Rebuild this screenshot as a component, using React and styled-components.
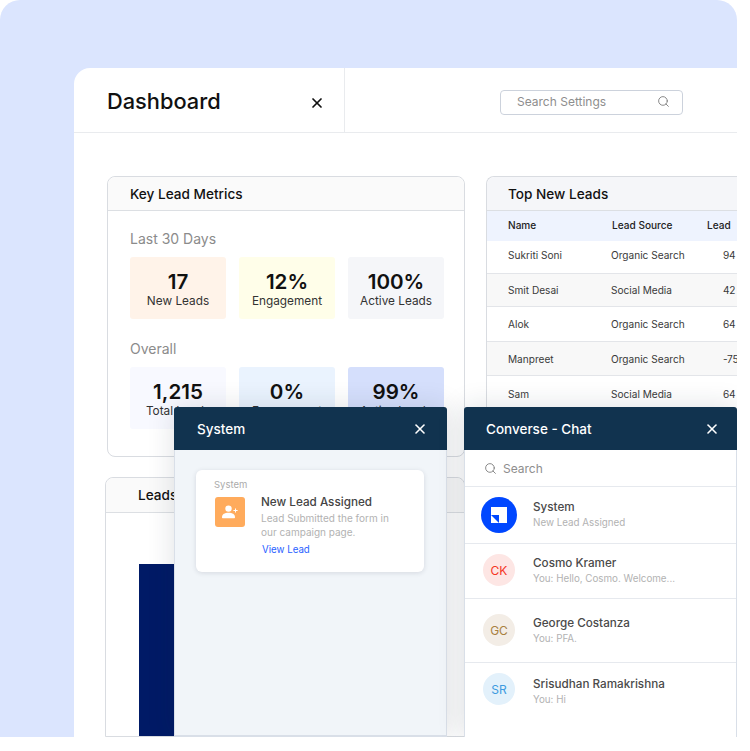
import React from "react";
import styled, { createGlobalStyle } from "styled-components";
import { Search, X } from "lucide-react";

const GlobalStyle = createGlobalStyle`
  body {
    margin: 0;
    background: #ffffff;
    font-family: Inter, "Noto Sans", sans-serif;
    color: #111111;
  }
`;

const Backdrop = styled.div`
  position: relative;
  width: 737px;
  height: 737px;
  box-sizing: border-box;
  padding: 68px 0 0 74px;
  background: #dbe5fe;
  border-radius: 20px 20px 0 0;
`;

const Window = styled.div`
  height: 669px;
  background: #ffffff;
  border-radius: 16px 0 0 0;
  overflow: hidden;
`;

const Header = styled.header`
  display: flex;
  height: 64px;
  border-bottom: 1px solid #e9ebee;
`;

const TitleBlock = styled.div`
  display: flex;
  align-items: center;
  justify-content: space-between;
  box-sizing: border-box;
  width: 271px;
  padding: 0 19px 0 33px;
  border-right: 1px solid #e9ebee;
`;

const Title = styled.h1`
  margin: 2px 0 0;
  font-size: 21.8px;
  font-weight: 500;
`;

const HeaderClose = styled(X)`
  margin-top: 5px;
`;

const SearchBox = styled.div`
  display: flex;
  align-items: center;
  justify-content: space-between;
  box-sizing: border-box;
  width: 183px;
  height: 25px;
  margin: 22px 0 0 155px;
  padding: 0 12px 2px 16px;
  border: 1px solid #ccd2dc;
  border-radius: 4px;
  font-size: 12px;
  color: #8e8e8e;
`;

const Content = styled.div`
  display: grid;
  grid-template-columns: 360px 1fr;
  column-gap: 21px;
  padding: 43px 0 0 31px;
`;

const LeftColumn = styled.div`
  display: flex;
  flex-direction: column;
  gap: 20px;
`;

const Card = styled.section`
  box-sizing: border-box;
  margin-left: ${(p) => p.$inset || 0}px;
  border: 1px solid #d9dce1;
  border-radius: 8px 8px 0 0;
  background: #ffffff;
`;

const MetricsCard = styled(Card)`
  height: 281px;
  width: 358px;
  border-radius: 8px;
`;

const CardHead = styled.div`
  height: ${(p) => p.$h || 33}px;
  display: flex;
  align-items: center;
  padding-left: ${(p) => p.$pad || 22}px;
  background: ${(p) => p.$bg || "#fafafa"};
  border-bottom: 1px solid #dcdfe3;
  border-radius: 8px 8px 0 0;
  font-size: 13.6px;
  font-weight: 500;
`;

const MetricsBody = styled.div`
  padding: 19px 20px 0 22px;
`;

const SectionLabel = styled.div`
  height: 27px;
  font-size: 14px;
  line-height: 17px;
  color: #8b8b8b;
`;

const TileRow = styled.div`
  display: grid;
  grid-template-columns: 96px 96px 96px;
  column-gap: 13px;
  margin-bottom: 21px;
`;

const Tile = styled.div`
  height: 62px;
  padding-top: 13px;
  box-sizing: border-box;
  text-align: center;
  border-radius: 3px;
  background: ${(p) => p.$bg};
`;

const TileValue = styled.div`
  font-size: 20.6px;
  line-height: 23px;
  font-weight: 600;
`;

const TileLabel = styled.div`
  margin-top: 1px;
  font-size: 11.8px;
  line-height: 15px;
  color: #333333;
`;

const LeadsCard = styled(Card)`
  width: 360px;
  height: 260px;
`;

const BarArea = styled.div`
  padding: 51px 0 0 33px;
`;

const Bar = styled.div`
  width: 60px;
  height: 172px;
  background: #001a66;
`;

const TableCard = styled(Card)`
  width: 300px;
  height: 260px;
  border-right: 0;
  border-radius: 8px 0 0 0;
`;

const TableRow = styled.div`
  display: grid;
  grid-template-columns: 103px 112px 1fr;
  align-items: center;
  padding: 0 0 ${(p) => p.$lift || 0}px 21px;
  box-sizing: border-box;
  height: ${(p) => p.$h}px;
  font-size: 10.1px;
  color: #3a3a3a;
  background: ${(p) => (p.$alt ? "#f8f8f8" : "#ffffff")};
  border-bottom: 1px solid #e3e5e9;
`;

const TableHead = styled(TableRow)`
  grid-template-columns: 104px 95px 1fr;
  background: #eef3fe;
  border-bottom: 0;
  font-weight: 500;
  color: #222222;
`;

const Score = styled.span`
  letter-spacing: -0.3px;
`;

const Popup = styled.aside`
  position: absolute;
  top: 407px;
  left: ${(p) => p.$left}px;
  width: 273px;
  height: 330px;
  display: flex;
  flex-direction: column;
  box-shadow: 0 0 26px rgba(30, 40, 60, 0.14);
  clip-path: inset(-40px ${(p) => (p.$clipRight ? 0 : "-40px")} -40px -40px);
`;

const PopupBar = styled.div`
  display: flex;
  align-items: center;
  justify-content: space-between;
  height: 43px;
  flex-shrink: 0;
  padding: 0 ${(p) => p.$right}px 0 ${(p) => p.$leftPad}px;
  background: #11334f;
  border-radius: 3px 3px 0 0;
  color: #ffffff;
  font-size: 13.5px;
  font-weight: 500;
`;

const PopupBody = styled.div`
  flex: 1;
  border: 1px solid #d9dfe8;
  border-top: 0;
  border-bottom-width: 2px;
  background: ${(p) => p.$bg};
`;

const Notice = styled.div`
  box-sizing: border-box;
  width: 228px;
  height: 102px;
  margin: 20px 0 0 21px;
  padding: 9px 0 0 18px;
  background: #ffffff;
  border-radius: 6px;
  box-shadow: 0 1px 5px rgba(40, 50, 70, 0.14);
`;

const NoticeFrom = styled.div`
  font-size: 9.5px;
  line-height: 12px;
  color: #ababab;
`;

const NoticeMain = styled.div`
  display: flex;
  gap: 16px;
  margin-top: 6px;
  padding-left: 1px;
`;

const NoticeIcon = styled.div`
  display: flex;
  align-items: center;
  justify-content: center;
  flex-shrink: 0;
  width: 30px;
  height: 30px;
  border-radius: 3px;
  background: #ffab5c;
`;

const NoticeCopy = styled.div`
  margin-top: -2px;
`;

const NoticeTitle = styled.div`
  font-size: 11.7px;
  line-height: 14px;
  font-weight: 500;
  color: #444444;
`;

const NoticeText = styled.div`
  width: 145px;
  margin-top: 3px;
  font-size: 10px;
  line-height: 13.5px;
  color: #b2b2b2;
`;

const NoticeLink = styled.a`
  display: block;
  margin-top: 4px;
  padding-left: 1px;
  font-size: 9.7px;
  line-height: 13px;
  color: #2962ff;
`;

const ChatSearch = styled.div`
  display: flex;
  align-items: center;
  gap: 6px;
  height: 36px;
  padding-left: 19px;
  border-bottom: 1px solid #e6e9ee;
  font-size: 12px;
  color: #8e8e8e;
`;

const ChatRow = styled.div`
  display: flex;
  align-items: flex-start;
  gap: 18px;
  box-sizing: border-box;
  height: ${(p) => p.$h}px;
  padding: ${(p) => p.$top}px 0 0 18px;
  border-bottom: ${(p) => (p.$last ? "0" : "1px solid #e6e9ee")};
`;

const Avatar = styled.div`
  display: flex;
  align-items: center;
  justify-content: center;
  flex-shrink: 0;
  width: 32px;
  height: 32px;
  border-radius: 50%;
  font-size: 12px;
  color: ${(p) => p.$fg};
  background: ${(p) => p.$bg};
`;

const LogoAvatar = styled.div`
  flex-shrink: 0;
  width: 36px;
  height: 36px;
  margin: 0 -2px;
  border-radius: 50%;
  background: #0047ff;
`;

const ChatCopy = styled.div`
  padding-top: ${(p) => p.$drop}px;
`;

const ChatName = styled.div`
  font-size: 11.7px;
  line-height: 14px;
  font-weight: 500;
  color: #4a4a4a;
`;

const ChatLine = styled.div`
  margin-top: 3px;
  font-size: 9.8px;
  line-height: 12px;
  color: #b2b2b2;
`;

const leads = [
  { name: "Sukriti Soni", source: "Organic Search", score: "94", h: 33, lift: 4 },
  { name: "Smit Desai", source: "Social Media", score: "42", h: 33, alt: true },
  { name: "Alok", source: "Organic Search", score: "64", h: 35 },
  { name: "Manpreet", source: "Organic Search", score: "-75", h: 34, alt: true },
  { name: "Sam", source: "Social Media", score: "64", h: 36 },
];

const recent = [
  { label: "New Leads", value: "17", bg: "#fff3e9" },
  { label: "Engagement", value: "12%", bg: "#fffee9" },
  { label: "Active Leads", value: "100%", bg: "#f5f6f9" },
];

const overall = [
  { label: "Total Leads", value: "1,215", bg: "#f8f9ff" },
  { label: "Engagement", value: "0%", bg: "#eaf3fe" },
  { label: "Active Leads", value: "99%", bg: "#d5dffc" },
];

const chats = [
  { name: "Cosmo Kramer", line: "You: Hello, Cosmo. Welcome...", initials: "CK", fg: "#f5351f", bg: "#fde6e4", h: 55, top: 10, drop: 2 },
  { name: "George Costanza", line: "You: PFA.", initials: "GC", fg: "#a8803f", bg: "#f3ede6", h: 64, top: 15, drop: 2 },
  { name: "Srisudhan Ramakrishna", line: "You: Hi", initials: "SR", fg: "#3d9be0", bg: "#e3f1fb", h: 74, top: 10, drop: 4, last: true },
];

const Tiles = ({ items }) => (
  <TileRow>
    {items.map((item) => (
      <Tile key={item.label} $bg={item.bg}>
        <TileValue>{item.value}</TileValue>
        <TileLabel>{item.label}</TileLabel>
      </Tile>
    ))}
  </TileRow>
);

const App = () => {
  return (
    <>
      <GlobalStyle />
      <Backdrop>
        <Window>
          <Header>
            <TitleBlock>
              <Title>Dashboard</Title>
              <HeaderClose size={16} strokeWidth={2.6} color="#111" />
            </TitleBlock>
            <SearchBox>
              Search Settings
              <Search size={13} strokeWidth={1.6} color="#777" />
            </SearchBox>
          </Header>
          <Content>
            <LeftColumn>
              <MetricsCard $inset={2}>
                <CardHead>Key Lead Metrics</CardHead>
                <MetricsBody>
                  <SectionLabel>Last 30 Days</SectionLabel>
                  <Tiles items={recent} />
                  <SectionLabel>Overall</SectionLabel>
                  <Tiles items={overall} />
                </MetricsBody>
              </MetricsCard>
              <LeadsCard>
                <CardHead $h={34} $pad={32}>Leads</CardHead>
                <BarArea>
                  <Bar />
                </BarArea>
              </LeadsCard>
            </LeftColumn>
            <TableCard>
              <CardHead $bg="#f5f6f9" $pad={21}>Top New Leads</CardHead>
              <TableHead $h={30} $lift={2}>
                <span>Name</span>
                <span>Lead Source</span>
                <span>Lead</span>
              </TableHead>
              {leads.map((lead) => (
                <TableRow key={lead.name} $h={lead.h} $alt={lead.alt} $lift={lead.lift}>
                  <span>{lead.name}</span>
                  <span>{lead.source}</span>
                  <Score>{lead.score}</Score>
                </TableRow>
              ))}
            </TableCard>
          </Content>
        </Window>

        <Popup $left={174}>
          <PopupBar $leftPad={23} $right={19}>
            System
            <X size={16} strokeWidth={2.4} />
          </PopupBar>
          <PopupBody $bg="#f1f5f9">
            <Notice>
              <NoticeFrom>System</NoticeFrom>
              <NoticeMain>
                <NoticeIcon>
                  <svg width="16" height="14" viewBox="0 0 16 14" fill="#fff">
                    <circle cx="6.5" cy="3.6" r="3.2" />
                    <path d="M0 12.200c0-2.900 2.600-4.400 6.500-4.400s6.500 1.500 6.500 4.400c0 .6-.4 1-1 1H1c-.6 0-1-.4-1-1z" />
                    <path d="M13 3.400h1v1.600h1.600v1H14v1.600h-1V6h-1.600V5H13z" />
                  </svg>
                </NoticeIcon>
                <NoticeCopy>
                  <NoticeTitle>New Lead Assigned</NoticeTitle>
                  <NoticeText>Lead Submitted the form in our campaign page.</NoticeText>
                  <NoticeLink>View Lead</NoticeLink>
                </NoticeCopy>
              </NoticeMain>
            </Notice>
          </PopupBody>
        </Popup>

        <Popup $left={464} $clipRight>
          <PopupBar $leftPad={22} $right={17}>
            Converse - Chat
            <X size={16} strokeWidth={2.4} />
          </PopupBar>
          <PopupBody $bg="#ffffff">
            <ChatSearch>
              <Search size={13} strokeWidth={1.6} color="#777" />
              Search
            </ChatSearch>
            <ChatRow $h={57} $top={10}>
              <LogoAvatar>
                <svg width="36" height="36" viewBox="0 0 36 36">
                  <rect x="10" y="10" width="16" height="16" fill="#fff" />
                  <path d="M10 18h8v8z" fill="#0047ff" />
                </svg>
              </LogoAvatar>
              <ChatCopy $drop={3}>
                <ChatName>System</ChatName>
                <ChatLine>New Lead Assigned</ChatLine>
              </ChatCopy>
            </ChatRow>
            {chats.map((chat) => (
              <ChatRow key={chat.name} $h={chat.h} $top={chat.top} $last={chat.last}>
                <Avatar $fg={chat.fg} $bg={chat.bg}>{chat.initials}</Avatar>
                <ChatCopy $drop={chat.drop}>
                  <ChatName>{chat.name}</ChatName>
                  <ChatLine>{chat.line}</ChatLine>
                </ChatCopy>
              </ChatRow>
            ))}
          </PopupBody>
        </Popup>
      </Backdrop>
    </>
  );
};

export default App;
